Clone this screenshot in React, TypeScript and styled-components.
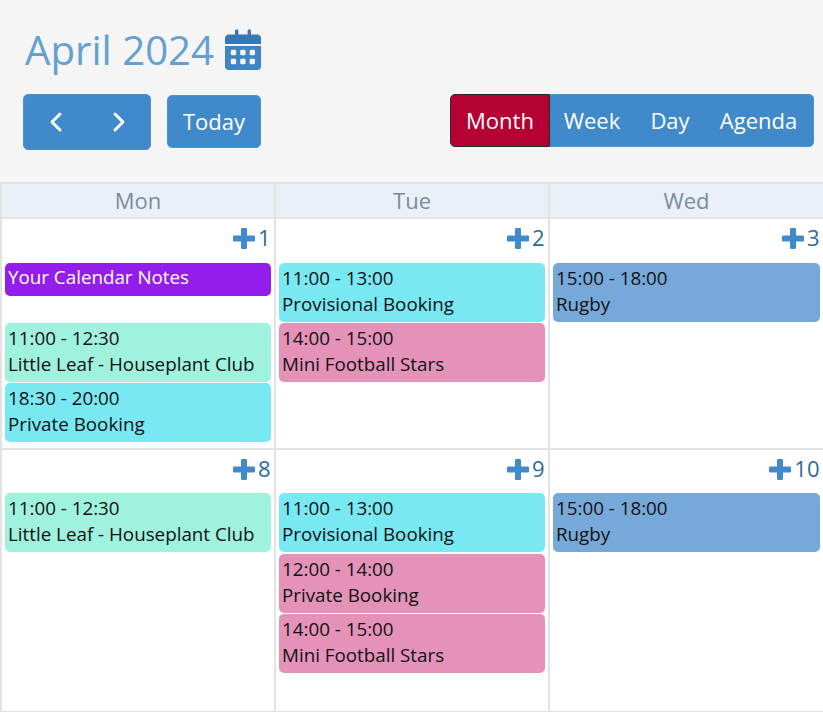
import React from "react";
import styled, { createGlobalStyle } from "styled-components";
import { ChevronLeft, ChevronRight } from "lucide-react";

const Global = createGlobalStyle`
  html, body { margin: 0; padding: 0; background: #fff; overflow: hidden; }
  body { font-family: "Open Sans", "Liberation Sans", sans-serif; }
  * { box-sizing: border-box; }
`;

const Page = styled.div`
  width: 823px;
  height: 712px;
  overflow: hidden;
`;

const Header = styled.header`
  height: 182px;
  background: #f5f5f5;
  padding: 26px 9px 0 23px;
`;

const TitleRow = styled.div`
  display: flex;
  align-items: center;
  gap: 11px;
  height: 47px;
  padding-left: 2px;
`;

const Title = styled.h1`
  margin: 0;
  font-size: 40.2px;
  font-weight: 400;
  line-height: 48px;
  color: #64a1d1;
`;

const Toolbar = styled.div`
  display: flex;
  align-items: flex-start;
  margin-top: 21px;
`;

const Button = styled.button`
  border: 1px solid #4d93cf;
  background: #4089ca;
  color: #fff;
  font-family: inherit;
  font-size: 22px;
  display: flex;
  align-items: center;
  justify-content: center;
  padding: 0 0 2px;
`;

const NavButton = styled(Button)`
  width: 128px;
  height: 56px;
  border-radius: 5px;
  gap: 31px;
  padding: 0;
`;

const TodayButton = styled(Button)`
  width: 94px;
  height: 53px;
  border-radius: 5px;
  margin: 1px 0 0 16px;
`;

const ViewGroup = styled.div`
  margin-left: auto;
  display: flex;
  height: 53px;
  width: 364px;
`;

const ViewButton = styled(Button)<{ $active?: boolean; $w: number }>`
  width: ${(p) => p.$w}px;
  padding: ${(p) => (p.$active ? "0 0 2px" : "0 2px 2px 0")};
  background: ${(p) => (p.$active ? "#b50034" : "#4089ca")};
  border: ${(p) => (p.$active ? "1px solid #2a2a2a" : "1px solid #4d93cf")};
  border-width: ${(p) => (p.$active ? "1px" : "1px 0")};
  border-radius: ${(p) => (p.$active ? "5px 0 0 5px" : "0")};
  &:last-child {
    border-width: 1px 1px 1px 0;
    border-radius: 0 5px 5px 0;
  }
`;

const Grid = styled.div`
  display: grid;
  grid-template-columns: 274px 274px 275px;
  grid-template-rows: 35px 230.7px 263.3px;
  border-bottom: 1px solid #e3e3e3;
  height: 530px;
`;

const HeadCell = styled.div`
  background: #ebf0f8;
  color: #7b8b9d;
  font-size: 22px;
  text-align: center;
  line-height: 33px;
  border-top: 2px solid #e3e3e3;
  border-left: 2px solid #e3e3e3;
`;

const DayCell = styled.div`
  background: #fff;
  border-top: 2px solid #e3e3e3;
  border-left: 2px solid #e3e3e3;
  padding: 0 3.5px 0 3px;
  display: flex;
  flex-direction: column;
`;

const DayHead = styled.div`
  height: 43.5px;
  display: flex;
  justify-content: flex-end;
  align-items: flex-start;
  padding: 3px 0 0 0;
  font-size: 22px;
  line-height: 30px;
  color: #2b6a9b;
  gap: 3px;
`;

const AddIcon = styled.svg`
  width: 22px;
  height: 21px;
  color: #4089ca;
  margin-top: 6px;
  flex: none;
`;

const Event = styled.div<{ $bg: string }>`
  height: 59px;
  margin-bottom: 1.5px;
  border-radius: 5px;
  background: ${(p) => p.$bg};
  color: #111;
  font-size: 18.8px;
  line-height: 26px;
  padding: 2px 3px;
  white-space: nowrap;
  overflow: hidden;
`;

const NoteEvent = styled(Event)`
  height: 33px;
  margin-bottom: 27px;
  color: #fff;
  padding-top: 1px;
`;

const Line = styled.div``;

const TEAL = "#9ff2dd";
const CYAN = "#78e8f3";
const PINK = "#e592b9";
const BLUE = "#76a9da";
const PURPLE = "#931eeb";

const CalendarIcon = () => (
  <svg width="36" height="41" viewBox="0 0 36 41" fill="none">
    <path d="M0 17h36v20a4 4 0 0 1-4 4H4a4 4 0 0 1-4-4z" fill="#3f85c3" />
    <path d="M0 15V10a4 4 0 0 1 4-4.5h6V2a1.7 1.7 0 0 1 3.4 0v3.5h9.2V2a1.7 1.7 0 0 1 3.4 0v3.5h6a4 4 0 0 1 4 4.5v5z" fill="#3778b5" />
    {[5.8, 15.2, 24.6].map((x) =>
      [20.8, 29.8].map((y) => <rect key={`${x}-${y}`} x={x} y={y} width="5.4" height="5.4" rx="1.3" fill="#f5f5f5" />)
    )}
  </svg>
);

const PlusIcon = () => (
  <AddIcon viewBox="0 0 22 21" aria-hidden="true">
    <rect x="0" y="7.5" width="22" height="6" rx="1.2" fill="currentColor" />
    <rect x="8" y="0" width="6" height="21" rx="1.2" fill="currentColor" />
  </AddIcon>
);

type Ev = { time: string; name: string; bg: string };
const LL = (): Ev => ({ time: "11:00 - 12:30", name: "Little Leaf - Houseplant Club", bg: TEAL });
const PROV = (): Ev => ({ time: "11:00 - 13:00", name: "Provisional Booking", bg: CYAN });
const MINI = (): Ev => ({ time: "14:00 - 15:00", name: "Mini Football Stars", bg: PINK });
const RUGBY = (): Ev => ({ time: "15:00 - 18:00", name: "Rugby", bg: BLUE });

const days: { n: number; note?: string; events: Ev[] }[] = [
  { n: 1, note: "Your Calendar Notes", events: [LL(), { time: "18:30 - 20:00", name: "Private Booking", bg: CYAN }] },
  { n: 2, events: [PROV(), MINI()] },
  { n: 3, events: [RUGBY()] },
  { n: 8, events: [LL()] },
  { n: 9, events: [PROV(), { time: "12:00 - 14:00", name: "Private Booking", bg: PINK }, MINI()] },
  { n: 10, events: [RUGBY()] },
];

export default function App() {
  return (
    <Page>
      <Global />
      <Header>
        <TitleRow>
          <Title>April 2024</Title>
          <CalendarIcon />
        </TitleRow>
        <Toolbar>
          <NavButton aria-label="Previous and next">
            <ChevronLeft size={32} strokeWidth={2.2} />
            <ChevronRight size={32} strokeWidth={2.2} />
          </NavButton>
          <TodayButton>Today</TodayButton>
          <ViewGroup>
            <ViewButton $active $w={100}>Month</ViewButton>
            <ViewButton $w={86}>Week</ViewButton>
            <ViewButton $w={70}>Day</ViewButton>
            <ViewButton $w={108}>Agenda</ViewButton>
          </ViewGroup>
        </Toolbar>
      </Header>
      <Grid>
        {["Mon", "Tue", "Wed"].map((d) => (
          <HeadCell key={d}>{d}</HeadCell>
        ))}
        {days.map((d) => (
          <DayCell key={d.n}>
            <DayHead>
              <PlusIcon />
              <span>{d.n}</span>
            </DayHead>
            {d.note && <NoteEvent $bg={PURPLE}>{d.note}</NoteEvent>}
            {d.events.map((e, i) => (
              <Event key={i} $bg={e.bg}>
                <Line>{e.time}</Line>
                <Line>{e.name}</Line>
              </Event>
            ))}
          </DayCell>
        ))}
      </Grid>
    </Page>
  );
}
